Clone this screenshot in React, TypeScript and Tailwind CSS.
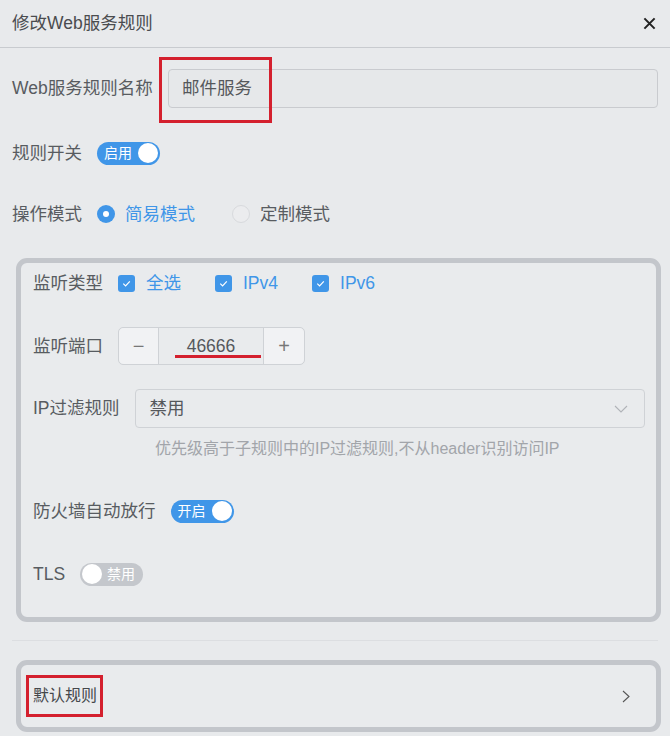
import React from 'react'

const font = { fontFamily: '"Liberation Sans", "Noto Sans CJK SC", sans-serif' }

const Switch = ({ on, label }: { on: boolean; label: string }) => (
  <div
    className={`flex items-center justify-between h-[23px] w-[63px] rounded-full px-[2px] ${
      on ? 'bg-[#4096e8]' : 'bg-[#c4c7cc]'
    }`}
  >
    {on ? (
      <>
        <span className="pl-[5px] text-[14px] text-white leading-none">{label}</span>
        <span className="h-[20px] w-[20px] rounded-full bg-white" />
      </>
    ) : (
      <>
        <span className="h-[20px] w-[20px] rounded-full bg-white" />
        <span className="pr-[6px] text-[14px] text-white leading-none">{label}</span>
      </>
    )}
  </div>
)

const Check = ({ label }: { label: string }) => (
  <div className="flex items-center gap-[11px]">
    <span className="flex h-[17px] w-[17px] items-center justify-center rounded-[3px] bg-[#4096e8]">
      <svg width="11" height="11" viewBox="0 0 12 12" fill="none">
        <path d="M2.5 6.2 5 8.6 9.6 3.6" stroke="white" strokeWidth="1.3" />
      </svg>
    </span>
    <span className="text-[17.5px] text-[#4096e8]">{label}</span>
  </div>
)

export default function App() {
  return (
    <div
      className="relative h-[736px] w-[670px] overflow-hidden bg-[#e8eaec] text-[#585c61]"
      style={font}
    >
      {/* header */}
      <div className="flex h-[48px] items-center justify-between border-b border-[#c8cbcf] pl-3 pr-[14px]">
        <span className="text-[17.5px] text-[#4a4c4f]">修改Web服务规则</span>
        <svg width="13" height="13" viewBox="0 0 14 14">
          <path d="M1.5 1.5 12.5 12.5M12.5 1.5 1.5 12.5" stroke="#222" strokeWidth="2.2" />
        </svg>
      </div>

      <div className="px-3">
        {/* name */}
        <div className="mt-[21px] flex h-[39px] items-center">
          <span className="w-[156px] text-[17.5px]">Web服务规则名称</span>
          <div className="flex h-[39px] flex-1 items-center rounded-[4px] border border-[#c9cbcf] bg-[#e6e8ea] pl-[13px] text-[17.5px] text-[#55585c]">
            邮件服务
          </div>
        </div>

        {/* switch */}
        <div className="mt-[25px] flex h-[40px] items-center gap-[15px]">
          <span className="text-[17.5px]">规则开关</span>
          <Switch on label="启用" />
        </div>

        {/* mode */}
        <div className="mt-[21px] flex h-[40px] items-center">
          <span className="mr-[15px] text-[17.5px]">操作模式</span>
          <span className="flex h-[18px] w-[18px] items-center justify-center rounded-full bg-[#4096e8]">
            <span className="h-[6px] w-[6px] rounded-full bg-white" />
          </span>
          <span className="ml-[10px] text-[17.5px] text-[#4096e8]">简易模式</span>
          <span className="ml-[37px] h-[18px] w-[18px] rounded-full border border-[#d8dadd] bg-[#ebecee]" />
          <span className="ml-[10px] text-[17.5px]">定制模式</span>
        </div>

        {/* inner card */}
        <div className="ml-[4px] mr-[-3px] mt-[24px] h-[364px] rounded-[11px] border-[5px] border-[#c3c6cb] bg-[#e9ebed] px-3">
          <div className="mt-[4px] flex h-[32px] items-center">
            <span className="mr-[15px] text-[17.5px]">监听类型</span>
            <div className="flex items-center gap-[34px]">
              <Check label="全选" />
              <Check label="IPv4" />
              <Check label="IPv6" />
            </div>
          </div>

          <div className="mt-[28px] flex h-[38px] items-center">
            <span className="mr-[15px] text-[17.5px]">监听端口</span>
            <div className="flex h-[38px] w-[187px] rounded-[5px] border border-[#cfd2d6]">
              <span className="flex w-[40px] items-center justify-center rounded-l-[5px] border-r border-[#cfd2d6] bg-[#f1f2f4] text-[20px] text-[#777]">
                −
              </span>
              <span className="flex flex-1 items-center justify-center text-[17.5px] text-[#55585c]">46666</span>
              <span className="flex w-[41px] items-center justify-center rounded-r-[5px] border-l border-[#cfd2d6] bg-[#f1f2f4] text-[20px] text-[#777]">
                +
              </span>
            </div>
          </div>

          <div className="mt-[24px] flex h-[39px] items-center">
            <span className="mr-[15px] text-[17.5px]">IP过滤规则</span>
            <div className="mr-[-1px] flex h-[39px] flex-1 items-center justify-between rounded-[4px] border border-[#cfd2d6] pl-[14px] pr-[16px]">
              <span className="text-[17.5px] text-[#55585c]">禁用</span>
              <svg width="14" height="8" viewBox="0 0 14 8" fill="none">
                <path d="M1 1 7 7 13 1" stroke="#b0b3b8" strokeWidth="1.1" />
              </svg>
            </div>
          </div>
          <div className="mt-[9px] pl-[122px] text-[16px] text-[#a2a5aa]">
            优先级高于子规则中的IP过滤规则,不从header识别访问IP
          </div>

          <div className="mt-[30px] flex h-[40px] items-center gap-[15px]">
            <span className="text-[17.5px]">防火墙自动放行</span>
            <Switch on label="开启" />
          </div>

          <div className="mt-[23px] flex h-[40px] items-center gap-[15px]">
            <span className="text-[17.5px]">TLS</span>
            <Switch on={false} label="禁用" />
          </div>
        </div>

        <div className="mt-[18px] h-px bg-[#dcdee1]" />

        {/* default rule */}
        <div className="ml-[4px] mr-[-3px] mt-[19px] flex h-[72px] items-center justify-between rounded-[11px] border-[5px] border-[#c3c6cb] bg-[#e9ebed] pl-3 pr-[26px]">
          <span className="text-[16px] text-[#44474b]">默认规则</span>
          <svg width="8" height="13" viewBox="0 0 8 13" fill="none">
            <path d="M1 1 7 6.5 1 12" stroke="#555" strokeWidth="1.1" />
          </svg>
        </div>
      </div>

      {/* annotations */}
      <div className="absolute left-[159px] top-[57px] h-[66px] w-[113px] border-[3px] border-[#d4202e]" />
      <div className="absolute left-[175px] top-[355px] h-[3px] w-[86px] bg-[#d4202e]" />
      <div className="absolute left-[26px] top-[675px] h-[42px] w-[77px] border-[3px] border-[#d4202e]" />
    </div>
  )
}
